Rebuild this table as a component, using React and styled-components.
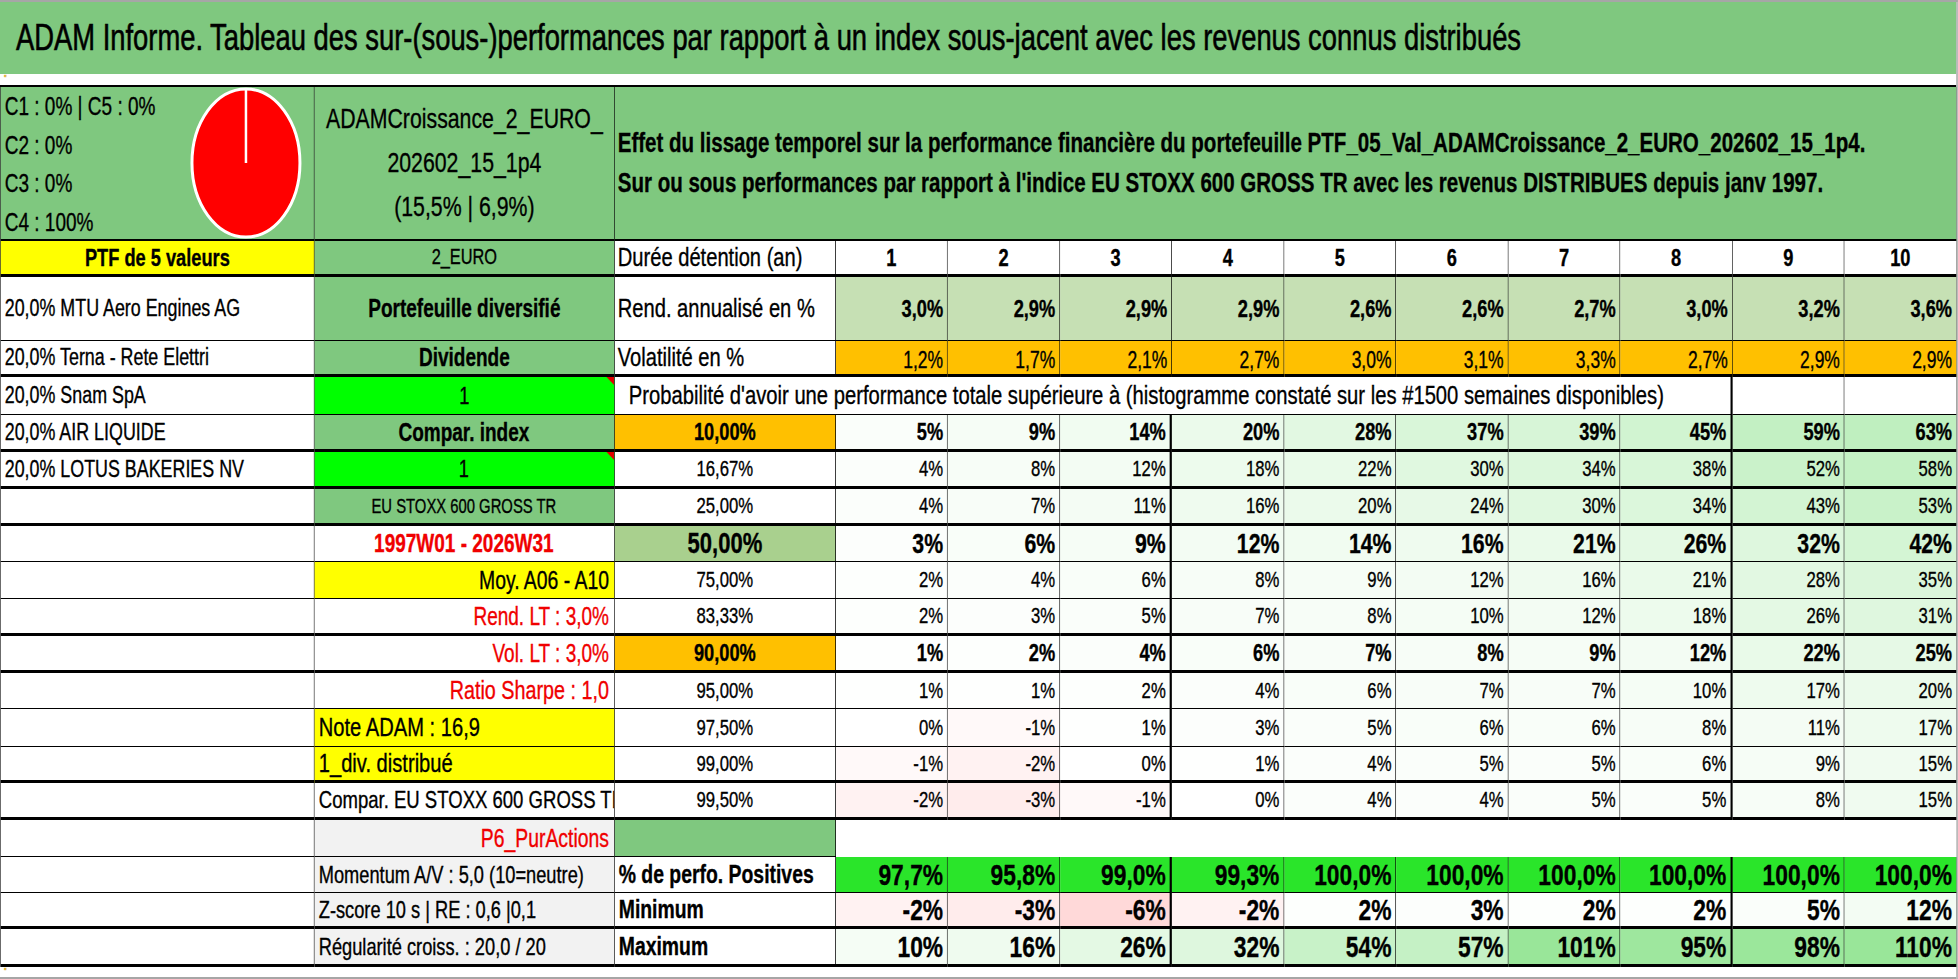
import React from 'react';
import styled, { createGlobalStyle } from 'styled-components';

// the sheet is drawn wide with plain fonts, then squeezed on x like the capture
const SX = 0.76;
const px = (v) => `${(v / SX).toFixed(2)}px`;

const GREEN = '#7fc87f';
const LIME = '#00ff00';
const BRIGHT = '#2ae52a';
const YELLOW = '#ffff00';
const ORANGE = '#ffc000';
const PALE = '#c6e0b4';
const SAGE = '#a9d08e';
const GREY = '#f2f2f2';
const RED = '#f00000';

const COLS = `${px(314)} ${px(300)} ${px(221)} repeat(10, ${px(112.1)})`;

const mix = (a, b, f) => {
  const c = a.map((x, i) => Math.round(x + (b[i] - x) * f));
  return `rgb(${c[0]}, ${c[1]}, ${c[2]})`;
};

const heat = (v) => {
  if (v < 0) return mix([255, 255, 255], [255, 204, 204], Math.min(1, -v / 8));
  return mix([255, 255, 255], [153, 230, 153], Math.min(1, v / 100));
};

const GlobalStyle = createGlobalStyle`
  *, *::before, *::after { box-sizing: border-box; }
  html, body { margin: 0; padding: 0; background: #fff; overflow: hidden; }
  body { font-family: "Liberation Sans", Arial, sans-serif; color: #000; }
`;

const Sheet = styled.div`
  width: ${px(1958)};
  height: 979px;
  overflow: hidden;
  transform: scaleX(${SX});
  transform-origin: 0 0;
  border-top: 2px solid #a6a6a6;
  border-right: ${px(2)} solid #a6a6a6;
  -webkit-text-stroke: 0.35px currentColor;
`;

const TitleBar = styled.div`
  height: 72px;
  display: flex;
  align-items: center;
  padding-left: ${px(16)};
  background: ${GREEN};
  font-size: 36px;
  white-space: nowrap;
  -webkit-text-stroke: 0.6px currentColor;
`;

const Strip = styled.div`
  height: ${(p) => p.$h}px;
  display: flex;
  align-items: flex-start;
  padding-left: ${px(4)};
  background: #fff;
  font-size: 9px;
  line-height: 9px;
  color: #d8a200;
  border-bottom: ${(p) => (p.$grey ? '2px solid #a6a6a6' : 'none')};
`;

const Table = styled.div`
  border-top: 2px solid #000;
  border-left: ${px(1.5)} solid #000;
`;

const Row = styled.div`
  --bb: ${(p) => p.$bb ?? 1}px;
  display: grid;
  grid-template-columns: ${COLS};
  height: ${(p) => p.$h}px;
`;

const JUSTIFY = { left: 'flex-start', center: 'center', right: 'flex-end', spread: 'space-between' };

const Cell = styled.div`
  grid-column: span ${(p) => p.$span || 1};
  position: relative;
  display: flex;
  align-items: ${(p) => p.$v || 'center'};
  justify-content: ${(p) => JUSTIFY[p.$align || 'left']};
  padding: 0 ${(p) => px(p.$pr ?? 4)} 0 ${(p) => px(p.$pl ?? 4)};
  background: ${(p) => p.$bg || '#fff'};
  color: ${(p) => p.$color || '#000'};
  font-size: ${(p) => p.$size || 22}px;
  font-weight: ${(p) => (p.$bold ? 700 : 400)};
  white-space: nowrap;
  overflow: hidden;
  border-right: ${(p) => (p.$open ? 'none' : `${px(p.$rw || 1.3)} solid #000`)};
  border-bottom: ${(p) => (p.$open ? 'none' : 'var(--bb) solid #000')};

  ${(p) =>
    p.$flag &&
    `&::after {
      content: '';
      position: absolute;
      top: 0;
      right: 0;
      border-style: solid;
      border-width: 0 ${px(8)} 8px 0;
      border-color: transparent #e00000 transparent transparent;
    }`}
`;

const Legend = styled.div`
  display: flex;
  flex-direction: column;
  align-self: flex-start;
  font-size: 25px;
  line-height: 38.5px;
`;

const NameBlock = styled.div`
  display: flex;
  flex-direction: column;
  align-items: center;
  font-size: 28px;
  line-height: 44px;
`;

const Intro = styled.div`
  display: flex;
  flex-direction: column;
  font-size: 27px;
  font-weight: 700;
  line-height: 40px;
`;

const PieBox = styled.svg`
  display: block;
  width: ${px(118)};
  height: 154px;
  flex: none;
`;

function Pie() {
  return (
    <PieBox viewBox="0 0 118 154" preserveAspectRatio="none">
      <ellipse cx="59" cy="77" rx="54" ry="74" fill="#ff0000" stroke="#fff" strokeWidth="3" />
      <line x1="59" y1="77" x2="59" y2="3" stroke="#fff" strokeWidth="2.5" />
    </PieBox>
  );
}

const YEARS = [1, 2, 3, 4, 5, 6, 7, 8, 9, 10];
const REND = ['3,0%', '2,9%', '2,9%', '2,9%', '2,6%', '2,6%', '2,7%', '3,0%', '3,2%', '3,6%'];
const VOL = ['1,2%', '1,7%', '2,1%', '2,7%', '3,0%', '3,1%', '3,3%', '2,7%', '2,9%', '2,9%'];

const RED_B = { color: RED, align: 'right', size: 25 };

const PROB = [
  {
    h: 37, bb: 3, a: '20,0% AIR LIQUIDE',
    b: { text: 'Compar. index', bg: GREEN, align: 'center', bold: true, size: 25 },
    q: '10,00%', qbg: ORANGE, kind: 'bold',
    vals: [5, 9, 14, 20, 28, 37, 39, 45, 59, 63],
  },
  {
    h: 37, bb: 3, a: '20,0% LOTUS BAKERIES NV',
    b: { text: '1', bg: LIME, align: 'center', size: 24, flag: true },
    q: '16,67%', vals: [4, 8, 12, 18, 22, 30, 34, 38, 52, 58],
  },
  {
    h: 37, bb: 3,
    b: { text: 'EU STOXX 600 GROSS TR', bg: GREEN, align: 'center', size: 19.5 },
    q: '25,00%', vals: [4, 7, 11, 16, 20, 24, 30, 34, 43, 53],
  },
  {
    h: 36, bb: 1,
    b: { text: '1997W01 - 2026W31', color: RED, align: 'center', bold: true, size: 25 },
    q: '50,00%', qbg: SAGE, kind: 'big',
    vals: [3, 6, 9, 12, 14, 16, 21, 26, 32, 42],
  },
  {
    h: 37, bb: 1,
    b: { text: 'Moy. A06 - A10', bg: YELLOW, align: 'right', size: 25.5 },
    q: '75,00%', vals: [2, 4, 6, 8, 9, 12, 16, 21, 28, 35],
  },
  {
    h: 37, bb: 3,
    b: { text: 'Rend. LT : 3,0%', ...RED_B },
    q: '83,33%', vals: [2, 3, 5, 7, 8, 10, 12, 18, 26, 31],
  },
  {
    h: 37, bb: 3,
    b: { text: 'Vol. LT : 3,0%', ...RED_B },
    q: '90,00%', qbg: ORANGE, kind: 'bold',
    vals: [1, 2, 4, 6, 7, 8, 9, 12, 22, 25],
  },
  {
    h: 36, bb: 1,
    b: { text: 'Ratio Sharpe : 1,0', ...RED_B, size: 26 },
    q: '95,00%', vals: [1, 1, 2, 4, 6, 7, 7, 10, 17, 20],
  },
  {
    h: 38, bb: 1,
    b: { text: 'Note ADAM : 16,9', bg: YELLOW, size: 26.5 },
    q: '97,50%', vals: [0, -1, 1, 3, 5, 6, 6, 8, 11, 17],
  },
  {
    h: 36, bb: 3,
    b: { text: '1_div. distribué', bg: YELLOW, size: 26.5 },
    q: '99,00%', vals: [-1, -2, 0, 1, 4, 5, 5, 6, 9, 15],
  },
  {
    h: 37, bb: 3,
    b: { text: 'Compar. EU STOXX 600 GROSS TR', size: 24.4 },
    q: '99,50%', vals: [-2, -3, -1, 0, 4, 4, 5, 5, 8, 15],
  },
];

const KIND = {
  plain: { size: 22, qsize: 22, bold: false },
  bold: { size: 24, qsize: 24, bold: true },
  big: { size: 28, qsize: 29, bold: true },
};

const STATS = [
  {
    h: 36, bb: 1, b: 'Momentum A/V : 5,0 (10=neutre)', label: '% de perfo. Positives',
    vals: ['97,7%', '95,8%', '99,0%', '99,3%', '100,0%', '100,0%', '100,0%', '100,0%', '100,0%', '100,0%'],
    bg: () => BRIGHT,
  },
  {
    h: 36, bb: 3, b: 'Z-score 10 s | RE : 0,6 |0,1', label: 'Minimum',
    vals: [-2, -3, -6, -2, 2, 3, 2, 2, 5, 12],
    bg: heat,
  },
  {
    h: 38, bb: 3, b: 'Régularité croiss. : 20,0 / 20', label: 'Maximum',
    vals: [10, 16, 26, 32, 54, 57, 101, 95, 98, 110],
    bg: heat,
  },
];

const edge = (i) => (i === 2 || i === 7 ? 2.6 : 1.3);

function ProbRow({ row }) {
  const k = KIND[row.kind || 'plain'];
  const b = row.b;
  return (
    <Row $h={row.h} $bb={row.bb}>
      <Cell $size={23.5}>{row.a}</Cell>
      <Cell
        $bg={b.bg}
        $color={b.color}
        $align={b.align}
        $bold={b.bold}
        $size={b.size}
        $flag={b.flag}
        $pr={5}
      >
        {b.text}
      </Cell>
      <Cell $bg={row.qbg} $align="center" $bold={k.bold} $size={k.qsize}>
        {row.q}
      </Cell>
      {row.vals.map((v, i) => (
        <Cell key={i} $bg={heat(v)} $align="right" $bold={k.bold} $size={k.size} $rw={edge(i)}>
          {v}%
        </Cell>
      ))}
    </Row>
  );
}

function StatRow({ row }) {
  return (
    <Row $h={row.h} $bb={row.bb}>
      <Cell />
      <Cell $bg={GREY} $size={24}>{row.b}</Cell>
      <Cell $bold $size={25.5}>{row.label}</Cell>
      {row.vals.map((v, i) => (
        <Cell
          key={i}
          $bg={row.bg(typeof v === 'number' ? v : 0)}
          $align="right"
          $bold
          $size={30}
          $rw={edge(i)}
        >
          {typeof v === 'number' ? `${v}%` : v}
        </Cell>
      ))}
    </Row>
  );
}

export default function App() {
  return (
    <>
      <GlobalStyle />
      <Sheet>
        <TitleBar>
          ADAM Informe. Tableau des sur-(sous-)performances par rapport à un index sous-jacent avec les revenus connus distribués
        </TitleBar>
        <Strip $h={11}>''</Strip>

        <Table>
          <Row $h={154} $bb={2}>
            <Cell $bg={GREEN} $align="spread" $pr={9}>
              <Legend>
                <span>C1 : 0% | C5 : 0%</span>
                <span>C2 : 0%</span>
                <span>C3 : 0%</span>
                <span>C4 : 100%</span>
              </Legend>
              <Pie />
            </Cell>
            <Cell $bg={GREEN} $align="center">
              <NameBlock>
                <span>ADAMCroissance_2_EURO_</span>
                <span>202602_15_1p4</span>
                <span>(15,5% | 6,9%)</span>
              </NameBlock>
            </Cell>
            <Cell $bg={GREEN} $span={11} $pl={3}>
              <Intro>
                <span>
                  Effet du lissage temporel sur la performance financière du portefeuille PTF_05_Val_ADAMCroissance_2_EURO_202602_15_1p4.
                </span>
                <span>
                  Sur ou sous performances par rapport à l'indice EU STOXX 600 GROSS TR avec les revenus DISTRIBUES depuis janv 1997.
                </span>
              </Intro>
            </Cell>
          </Row>

          <Row $h={36} $bb={3}>
            <Cell $bg={YELLOW} $align="center" $bold $size={24}>PTF de 5 valeurs</Cell>
            <Cell $bg={GREEN} $align="center" $size={21.5}>2_EURO</Cell>
            <Cell $size={26.5} $pl={3}>Durée détention (an)</Cell>
            {YEARS.map((y) => (
              <Cell key={y} $align="center" $bold $size={24}>{y}</Cell>
            ))}
          </Row>

          <Row $h={64} $bb={1}>
            <Cell $size={23.5}>20,0% MTU Aero Engines AG</Cell>
            <Cell $bg={GREEN} $align="center" $bold $size={25}>Portefeuille diversifié</Cell>
            <Cell $size={26.5} $pl={3}>Rend. annualisé en %</Cell>
            {REND.map((v, i) => (
              <Cell key={i} $bg={PALE} $align="right" $bold $size={24}>{v}</Cell>
            ))}
          </Row>

          <Row $h={36} $bb={3}>
            <Cell $size={23.5}>20,0% Terna - Rete Elettri</Cell>
            <Cell $bg={GREEN} $align="center" $bold $size={25}>Dividende</Cell>
            <Cell $size={26.5} $pl={3}>Volatilité en %</Cell>
            {VOL.map((v, i) => (
              <Cell key={i} $bg={ORANGE} $align="right" $v="flex-end" $size={23}>{v}</Cell>
            ))}
          </Row>

          <Row $h={38} $bb={1}>
            <Cell $size={23.5}>20,0% Snam SpA</Cell>
            <Cell $bg={LIME} $align="center" $size={24} $flag>1</Cell>
            <Cell $span={9} $pl={14} $size={26.6} $rw={2.6}>
              Probabilité d'avoir une performance totale supérieure à (histogramme constaté sur les #1500 semaines disponibles)
            </Cell>
            <Cell />
            <Cell />
          </Row>

          {PROB.map((row, i) => (
            <ProbRow key={i} row={row} />
          ))}

          <Row $h={37} $bb={1}>
            <Cell />
            <Cell $bg={GREY} $align="right" $color={RED} $size={25.5} $pr={5}>P6_PurActions</Cell>
            <Cell $bg={GREEN} />
            <Cell $span={10} $open />
          </Row>

          {STATS.map((row, i) => (
            <StatRow key={i} row={row} />
          ))}
        </Table>

        <Strip $h={12} $grey>
          ''
        </Strip>
      </Sheet>
    </>
  );
}
